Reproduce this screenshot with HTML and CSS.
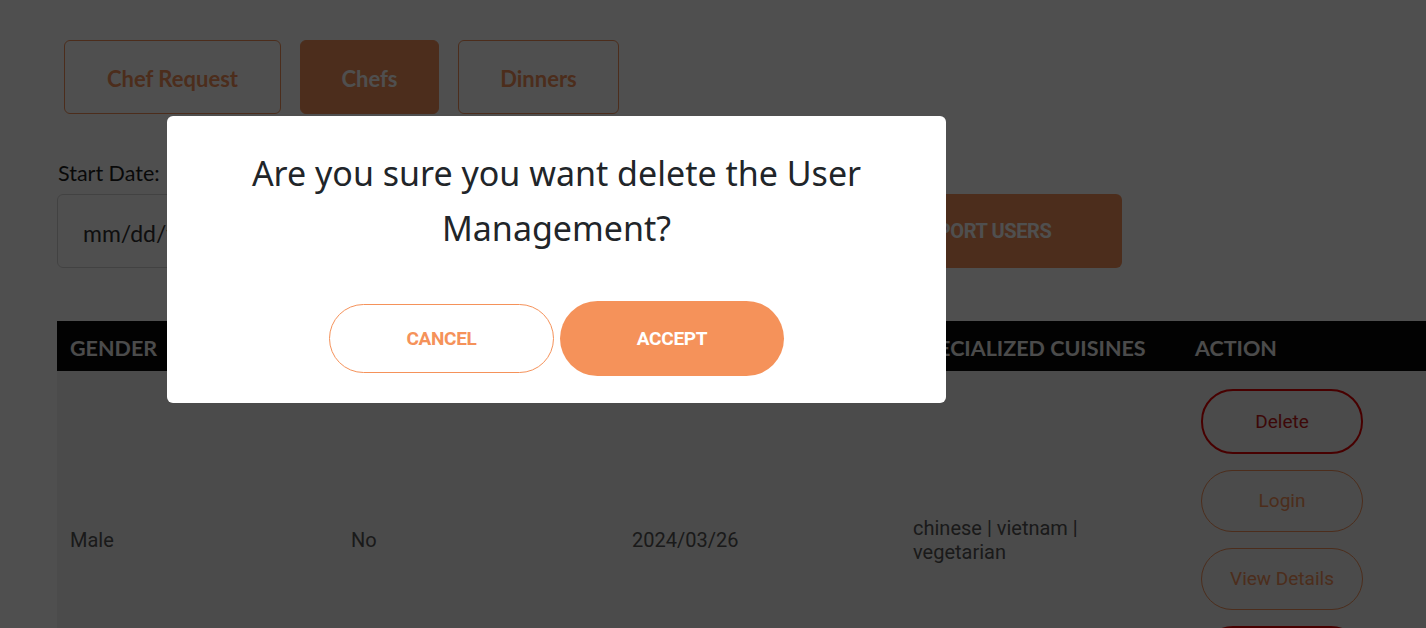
FILE: index.html
```html
<!DOCTYPE html>
<html lang="en">
<head>
<meta charset="utf-8">
<title>Chefs - User Management</title>
<link rel="stylesheet" href="styles.css">
</head>
<body>
<div class="page">
  <nav class="tabs">
    <button class="tab tab-request">Chef Request</button>
    <button class="tab tab-chefs active">Chefs</button>
    <button class="tab tab-dinners">Dinners</button>
  </nav>

  <section class="filters">
    <div class="field field-start">
      <label class="field-label">Start Date:</label>
      <div class="date-input">mm/dd/yyyy</div>
    </div>
    <div class="field field-end">
      <label class="field-label">End Date:</label>
      <div class="date-input">mm/dd/yyyy</div>
    </div>
    <button class="export-btn">EXPORT USERS</button>
  </section>

  <div class="table">
    <div class="thead">
      <div class="th">GENDER</div>
      <div class="th">VERIFIED</div>
      <div class="th">JOINED DATE</div>
      <div class="th">SPECIALIZED CUISINES</div>
      <div class="th">ACTION</div>
    </div>
    <div class="tr">
      <div class="td">Male</div>
      <div class="td">No</div>
      <div class="td">2024/03/26</div>
      <div class="td">chinese | vietnam | vegetarian</div>
      <div class="td td-action">
        <button class="act act-red">Delete</button>
        <button class="act act-orange">Login</button>
        <button class="act act-orange">View Details</button>
        <button class="act act-red">Block</button>
      </div>
    </div>
  </div>
</div>

<div class="overlay">
  <div class="modal">
    <p class="modal-text">Are you sure you want delete the User Management?</p>
    <div class="modal-actions">
      <button class="btn-cancel">CANCEL</button>
      <button class="btn-accept">ACCEPT</button>
    </div>
  </div>
</div>
</body>
</html>
```

FILE: styles.css
```css
html, body {
  margin: 0;
  padding: 0;
  overflow: hidden;
  background: #ffffff;
  width: 1426px;
  height: 628px;
}

body {
  font-family: "Lato", "Liberation Sans", sans-serif;
  color: #222;
}

button {
  font: inherit;
  cursor: pointer;
}

.page {
  padding: 40px 0 0 57px;
}

/* Tabs */
.tabs {
  display: flex;
  gap: 19px;
  margin-left: 7px;
}

.tab {
  height: 74px;
  border: 1px solid #f5925a;
  border-radius: 6px;
  background: #fff;
  color: #f5925a;
  font-family: "Lato", sans-serif;
  font-weight: 700;
  font-size: 22px;
  padding: 2px 0 0;
}

.tab-request { width: 217px; }
.tab-chefs { width: 139px; }
.tab-dinners { width: 161px; }

.tab.active {
  background: #f5925a;
  color: #fff;
}

/* Filters */
.filters {
  display: flex;
  align-items: flex-end;
  margin-top: 47px;
}

.field {
  display: flex;
  flex-direction: column;
  gap: 9px;
}

.field-start { width: 360px; }
.field-end { width: 360px; margin-left: 24px; }

.field-label {
  font-family: "Lato", sans-serif;
  font-size: 21.5px;
  line-height: 24px;
  color: #1e1e1e;
  padding-left: 1px;
}

.date-input {
  height: 74px;
  border: 1px solid #d6d6d6;
  border-radius: 6px;
  background: #fff;
  display: flex;
  align-items: center;
  padding: 3px 0 0 25px;
  box-sizing: border-box;
  font-family: "Lato", sans-serif;
  font-size: 23px;
  color: #333;
}

.export-btn {
  margin-left: 43px;
  width: 278px;
  height: 74px;
  border: none;
  border-radius: 6px;
  background: #f5925a;
  color: #fff;
  font-family: "Roboto", sans-serif;
  font-weight: 700;
  font-size: 20px;
  letter-spacing: -0.4px;
}

/* Table */
.table {
  margin-top: 53px;
  width: 1500px;
}

.thead {
  display: grid;
  grid-template-columns: repeat(5, 281px) 1fr;
  height: 50px;
  align-items: center;
  background: #080808;
}

.th {
  padding: 3px 0 0 13px;
  font-family: "Lato", sans-serif;
  font-weight: 700;
  font-size: 21.5px;
  color: #f2f2f2;
  white-space: nowrap;
}

.th:nth-child(5) { padding-left: 14px; }

.tr {
  display: grid;
  grid-template-columns: repeat(5, 281px) 1fr;
  align-items: center;
  background: #f0f0f0;
  padding: 18px 0;
}

.td {
  padding: 0 13px;
  font-family: "Roboto", sans-serif;
  font-size: 20px;
  line-height: 24px;
  color: #555;
}

.td-action {
  display: flex;
  flex-direction: column;
  gap: 16px;
  padding-left: 20px;
}

.act {
  width: 162px;
  height: 62px;
  border-radius: 32px;
  background: transparent;
  font-family: "Roboto", sans-serif;
  font-size: 19px;
  padding: 0;
}

.act-red {
  height: 65px;
  border: 2px solid #e60000;
  color: #c41a1a;
}

.act-orange {
  border: 1px solid #f5925a;
  color: #f5925a;
}

/* Modal */
.overlay {
  position: fixed;
  inset: 0;
  background: rgba(0, 0, 0, 0.69);
}

.modal {
  position: absolute;
  left: 167px;
  top: 116px;
  width: 779px;
  height: 287px;
  box-sizing: border-box;
  background: #fff;
  border-radius: 6px;
  padding: 30px 50px 0;
  display: flex;
  flex-direction: column;
  align-items: center;
}

.modal-text {
  margin: 0;
  width: 660px;
  text-align: center;
  font-family: "Noto Sans", "Open Sans", sans-serif;
  font-size: 34px;
  line-height: 55px;
  color: #212529;
}

.modal-actions {
  display: flex;
  align-items: center;
  gap: 6px;
  margin-top: 45px;
}

.btn-cancel {
  width: 225px;
  height: 69px;
  border: 1px solid #f5925a;
  border-radius: 35px;
  background: #fff;
  color: #f5925a;
  font-family: "Roboto", sans-serif;
  font-weight: 700;
  font-size: 19px;
  letter-spacing: -0.3px;
}

.btn-accept {
  width: 224px;
  height: 75px;
  border: none;
  border-radius: 38px;
  background: #f5925a;
  color: #fff;
  font-family: "Roboto", sans-serif;
  font-weight: 700;
  font-size: 19px;
  letter-spacing: -0.3px;
}
```
